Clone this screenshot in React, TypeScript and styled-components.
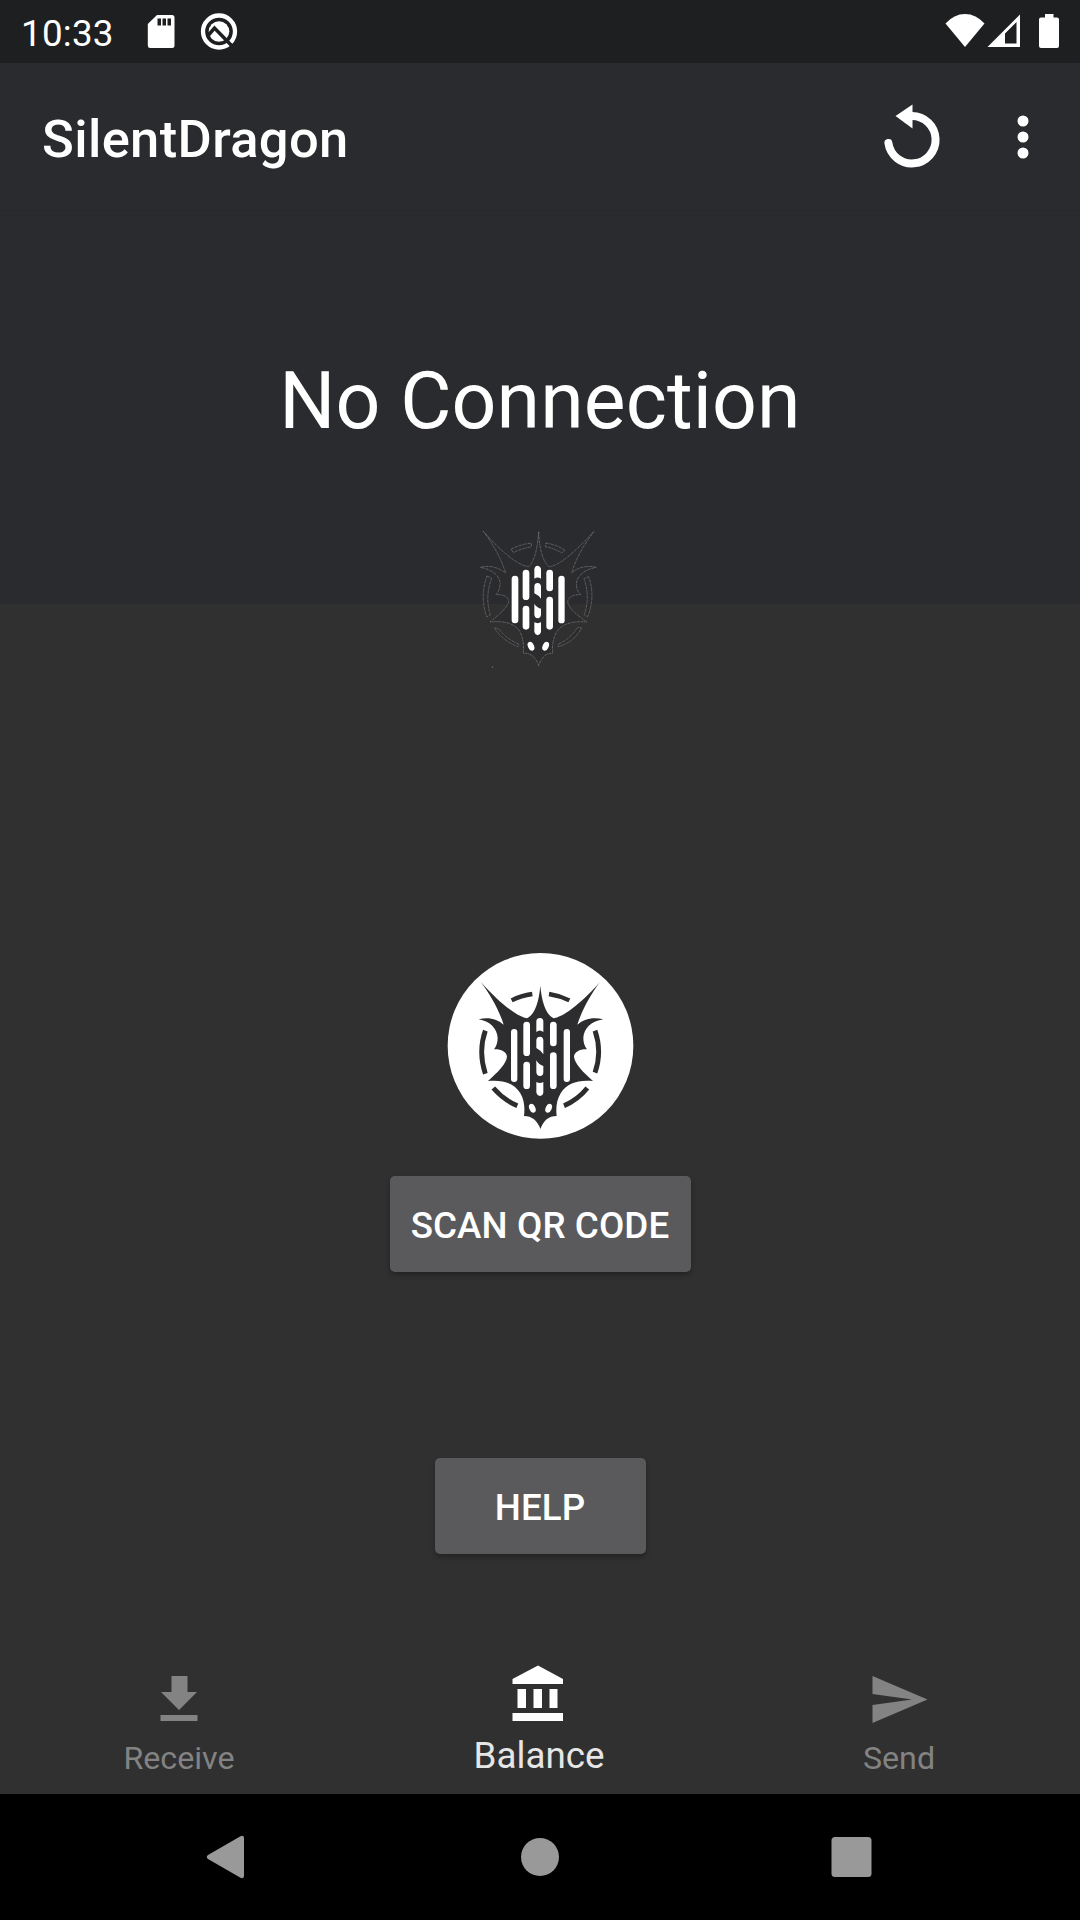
import React from "react";
import styled, { createGlobalStyle } from "styled-components";

const Global = createGlobalStyle`
  *, *::before, *::after { box-sizing: border-box; }
  body { margin: 0; background: #303030; }
`;

const Screen = styled.div`
  width: 1080px;
  height: 1920px;
  display: flex;
  flex-direction: column;
  overflow: hidden;
  background: #303030;
  color: #fff;
  font-family: Roboto, "Noto Sans", sans-serif;
`;

const Icon = styled.svg<{ $m?: string }>`
  display: block;
  flex: none;
  overflow: visible;
  margin: ${(p) => p.$m ?? "0"};
`;

const StatusBar = styled.header`
  height: 63px;
  flex: none;
  display: flex;
  align-items: flex-start;
  justify-content: space-between;
  padding: 0 20px 0 21px;
  background: #1e1f21;
`;

const StatusGroup = styled.div<{ $top: number }>`
  display: flex;
  align-items: flex-start;
  padding-top: ${(p) => p.$top}px;
`;

const Clock = styled.span`
  width: 126px;
  padding-top: 2px;
  font-size: 36.75px;
  line-height: 40px;
  letter-spacing: 0.25px;
`;

const AppBar = styled.div`
  height: 147px;
  flex: none;
  display: flex;
  align-items: center;
  justify-content: space-between;
  padding: 0 51.500px 0 42px;
  background: #2a2b2f;
`;

const Title = styled.h1`
  margin: 4px 0 0;
  font-size: 52.5px;
  line-height: 62px;
  font-weight: 500;
  letter-spacing: 0.36px;
`;

const Actions = styled.div`
  display: flex;
  align-items: center;
  gap: 76px;
`;

const IconButton = styled.button`
  padding: 0;
  border: 0;
  background: none;
  color: inherit;
`;

const Hero = styled.section`
  height: 394px;
  flex: none;
  display: flex;
  flex-direction: column;
  align-items: center;
  padding-top: 144px;
  border-top: 1px solid #27282b;
  background: #2a2b2f;
`;

const Status = styled.h2`
  margin: 0;
  font-size: 78.75px;
  line-height: 92px;
  font-weight: 400;
  letter-spacing: 0.1px;
`;

const HeroLogo = styled.div`
  height: 170px;
  margin-top: 63px;
  flex: none;
`;

const Content = styled.main`
  flex: 1;
  display: flex;
  flex-direction: column;
  align-items: center;
  padding-top: 336px;
`;

const Button = styled.button<{ $width: number; $gap: number }>`
  width: ${(p) => p.$width}px;
  height: 96px;
  flex: none;
  margin: ${(p) => p.$gap}px 0 0;
  padding: 3px 0 0;
  border: 0;
  border-radius: 5px;
  background: #5a5a5c;
  box-shadow: 0 3px 5px rgba(0, 0, 0, 0.28);
  color: #fff;
  font: 500 36.75px/44px Roboto, "Noto Sans", sans-serif;
  letter-spacing: 0.1px;
`;

const Tabs = styled.nav`
  height: 147px;
  flex: none;
  display: grid;
  grid-template-columns: 358px 362px 358px;
`;

const Tab = styled.div<{ $active?: boolean }>`
  display: flex;
  flex-direction: column;
  align-items: center;
  justify-content: flex-end;
  padding-bottom: 15px;
  color: ${(p) => (p.$active ? "#fff" : "#838383")};
`;

const TabLabel = styled.span<{ $active?: boolean }>`
  margin-top: ${(p) => (p.$active ? 12 : 15)}px;
  font-size: ${(p) => (p.$active ? 36.75 : 32.2)}px;
  line-height: ${(p) => (p.$active ? 46 : 42)}px;
  color: ${(p) => (p.$active ? "#e6e6e6" : "#838383")};
`;

const SystemNav = styled.footer`
  height: 126px;
  flex: none;
  display: flex;
  align-items: center;
  justify-content: space-between;
  padding: 0 208.500px 0 206px;
  background: #000;
  color: #999;
`;

const BIG_BODY =
  "M331 137C327 183 316 222 291 235C258 229 204 184 152 125C181 163 207 210 221 254C203 238 175 229 146 238C178 243 202 265 203 294C203 308 199 319 192 328C212 327 230 335 231 350C229 371 203 397 174 423C219 419 253 429 271 460C283 480 285 503 282 528C306 528 322 542 331.500 567C340 542 356 528 380 528C377 503 380 480 392 460C410 429 444 419 489 423C460 397 434 371 432 350C433 335 451 327 471 328C464 319 460 308 460 294C461 265 485 243 520 238C488 229 460 238 442 254C456 210 482 163 510 126C459 184 405 229 371 235C346 222 335 183 331 137Z";

const SMALL_BODY =
  "M236 65C233 110 224 155 206 170C170 166 118 118 70 64C98 100 124 147 137 189C115 172 88 165 61 172C94 178 120 196 120 220C120 234 116 245 108 254C128 253 146 259 146 275C142 293 116 316 90 336C135 331 166 342 180 365C190 385 192 408 190 430C213 427 229 444 236 467C243 444 257 428 278 430C276 408 278 387 290 365C306 342 335 332 380 336C352 316 327 297 323 275C325 259 343 253 363 254C352 245 349 234 349 220C352 196 375 178 409 172C380 165 353 172 335 189C347 147 374 100 402 64C352 118 302 166 268 170C246 155 238 110 236 65Z";

const Bar = ({ x, y, w, h }: { x: number; y: number; w: number; h: number }) => (
  <rect x={x} y={y} width={w} height={h} rx={w / 2} />
);

const Emblem = () => (
  <Icon width="220" height="210" viewBox="0 0 660 630">
    <circle cx="331.500" cy="317.500" r="278.500" fill="#fff" />
    <g fill="none" stroke="#2d2d2f" strokeWidth="14.500">
      <path d="M245 181Q273 167 307 162M357 162Q389 167 418 181" strokeWidth="13" />
      <path d="M166 272Q144 335 166 401M495 272Q517 335 495 398" />
      <path d="M190 444Q221 480 262 497M472 444Q443 480 402 497" />
    </g>
    <path d={BIG_BODY} fill="#2d2d2f" />
    <g fill="#fff">
      <Bar x={243} y={267} w={19} h={159} />
      <Bar x={280} y={245} w={20} h={103} />
      <Bar x={280} y={365} w={20} h={82} />
      <Bar x={360} y={245} w={20} h={74} />
      <Bar x={360} y={337} w={20} h={110} />
      <Bar x={401} y={267} w={19} h={159} />
      <path d="M319 276V243Q320 234 330 234Q340 235 340 244V276Q329 267 319 276Z" />
      <path d="M319 300Q320 290 330 290Q340 291 340 301V343Q332 331 319 324Z" />
      <path d="M319 361Q325 373 340 378V397Q340 408 330 408Q320 408 319 397Z" />
      <path d="M319 426Q330 432 340 426V456Q340 467 330 468Q320 467 319 456Z" />
      <ellipse cx="307" cy="505" rx="9" ry="14" transform="rotate(-24 307 505)" />
      <ellipse cx="356" cy="505" rx="9" ry="14" transform="rotate(24 356 505)" />
    </g>
  </Icon>
);

const OutlineEmblem = () => (
  <Icon width="160" height="170" viewBox="0 0 480 510">
    <g fill="#2c2c2e" stroke="#858789" strokeWidth="1.800" strokeDasharray="7 1.500 3 2">
      <path d="M153 118Q180 103 215 99L213 111Q185 115 160 128Z" />
      <path d="M258 99Q289 104 315 121L305 129Q282 115 256 110Z" />
      <path d="M81 198L95 205Q74 261 91 315L80 320Q59 258 81 198Z" />
      <path d="M386 200L372 206Q391 262 373 314L383 320Q407 259 386 200Z" />
      <path d="M103 354L115 356Q140 388 176 402L174 410Q130 393 103 354Z" />
      <path d="M365 354L353 352Q329 388 296 402L294 410Q341 397 365 354Z" />
      <path d={SMALL_BODY} />
      <circle cx="98" cy="471" r="1.500" />
    </g>
    <g fill="#fff">
      <Bar x={155} y={197} w={20} h={143} />
      <Bar x={188} y={179} w={20} h={91} />
      <Bar x={188} y={287} w={20} h={72} />
      <Bar x={259} y={179} w={20} h={65} />
      <Bar x={259} y={260} w={20} h={99} />
      <Bar x={295} y={197} w={19} h={143} />
      <path d="M223 206V178Q224 168 233 167Q242 169 243 178V206Q233 199 223 206Z" />
      <path d="M223 228Q224 219 233 219Q242 220 243 229V266Q236 256 223 250Z" />
      <path d="M223 281Q229 292 243 296V314Q242 324 233 325Q224 323 223 314Z" />
      <path d="M223 337Q233 342 243 337V366Q241 375 233 376Q225 375 223 366Z" />
      <ellipse cx="213" cy="409" rx="9" ry="14" transform="rotate(-24 213 409)" />
      <ellipse cx="257" cy="409" rx="9" ry="14" transform="rotate(24 257 409)" />
    </g>
  </Icon>
);

export default function App() {
  return (
    <Screen>
      <Global />
      <StatusBar>
        <StatusGroup $top={12}>
          <Clock>10:33</Clock>
          <Icon width="28" height="34" viewBox="0 0 28 34" $m="3px 0 0">
            <path fill="#fff" fillRule="evenodd" d="M10 0H25Q27.500 0 27.500 2.500V30.500Q27.500 33 25 33H3.200Q.8 33 .8 30.500V9Z M10.500 3.500V10.500H14V3.500Z M15.500 3.500V10.500H19V3.500Z M20.500 3.500V10.500H24V3.500Z" />
          </Icon>
          <Icon width="38" height="38" viewBox="0 0 38 38" $m="0 0 0 25px">
            <circle cx="19" cy="19.500" r="16" fill="none" stroke="#fff" strokeWidth="4.300" />
            <circle cx="19" cy="19.500" r="10.300" fill="#fff" />
            <path d="M8.500 23L14.500 16L32 34" fill="none" stroke="#1e1f21" strokeWidth="3.500" />
          </Icon>
        </StatusGroup>
        <StatusGroup $top={14}>
          <Icon width="40" height="34" viewBox="0 0 40 34">
            <path fill="#fff" d="M.5 9.500Q9 0 20 0Q31 0 39.500 9.500L20 33Z" />
          </Icon>
          <Icon width="34" height="34" viewBox="0 0 34 34" $m="0 0 0 2px">
            <path fill="#fff" fillRule="evenodd" d="M33 .5V33H.5Z M29.500 8L18 19.500V29.500H29.500Z" />
          </Icon>
          <Icon width="22" height="34" viewBox="0 0 22 34" $m="0 0 0 17px">
            <path fill="#fff" d="M7 0H15.500V3.500H19Q21 3.500 21 5.500V32Q21 34 19 34H3Q1 34 1 32V5.500Q1 3.500 3 3.500H7Z" />
          </Icon>
        </StatusGroup>
      </StatusBar>

      <AppBar>
        <Title>SilentDragon</Title>
        <Actions>
          <IconButton aria-label="Refresh">
            <Icon width="58" height="66" viewBox="0 0 58 66" $m="-2px 0 0">
              <path d="M29 13A23.700 23.700 0 1 1 5.400 40" fill="none" stroke="#fff" strokeWidth="8" strokeLinecap="round" />
              <path d="M29.500 1.500V25.500L12.500 13Z" fill="#fff" />
            </Icon>
          </IconButton>
          <IconButton aria-label="More options">
            <Icon width="12" height="44" viewBox="0 0 12 44" fill="#fff">
              <circle cx="6" cy="6" r="5.500" />
              <circle cx="6" cy="22" r="5.500" />
              <circle cx="6" cy="38" r="5.500" />
            </Icon>
          </IconButton>
        </Actions>
      </AppBar>

      <Hero>
        <Status>No Connection</Status>
        <HeroLogo>
          <OutlineEmblem />
        </HeroLogo>
      </Hero>

      <Content>
        <Emblem />
        <Button $width={301} $gap={26}>SCAN QR CODE</Button>
        <Button $width={211} $gap={186}>HELP</Button>
      </Content>

      <Tabs>
        <Tab>
          <Icon width="38" height="46" viewBox="0 0 38 46" fill="currentColor">
            <path d="M11.500 0H27.500V16H37L19 34L1 16H11.500ZM.5 39H37.500V45H.5Z" />
          </Icon>
          <TabLabel>Receive</TabLabel>
        </Tab>
        <Tab $active>
          <Icon width="52" height="56" viewBox="0 0 52 56" fill="currentColor" $m="0 2px 0 0">
            <path d="M.5 14L26 .5L51 14V19H.5ZM5.500 24H14V43H5.500ZM21.500 24H30V43H21.500ZM37.500 24H45.500V43H37.500ZM.5 48H51V56H.5Z" />
          </Icon>
          <TabLabel $active>Balance</TabLabel>
        </Tab>
        <Tab>
          <Icon width="56" height="48" viewBox="0 0 56 48" fill="currentColor" $m="0 0 -2px">
            <path d="M1.500 0L56.500 23.500L1.500 47V29L41 23.500L1.500 18Z" />
          </Icon>
          <TabLabel>Send</TabLabel>
        </Tab>
      </Tabs>

      <SystemNav>
        <Icon width="39" height="44" viewBox="0 0 39 44" fill="currentColor">
          <path d="M2 20L34.500 1.200Q38 0 38 3V41Q38 44 34.500 42.800L2 24Q-.5 22 2 20Z" />
        </Icon>
        <Icon width="38" height="38" viewBox="0 0 38 38" fill="currentColor" $m="0 0 0 5px">
          <circle cx="19" cy="19" r="19" />
        </Icon>
        <Icon width="41" height="40" viewBox="0 0 41 40" fill="currentColor">
          <rect x=".5" width="40" height="40" rx="3.500" />
        </Icon>
      </SystemNav>
    </Screen>
  );
}
